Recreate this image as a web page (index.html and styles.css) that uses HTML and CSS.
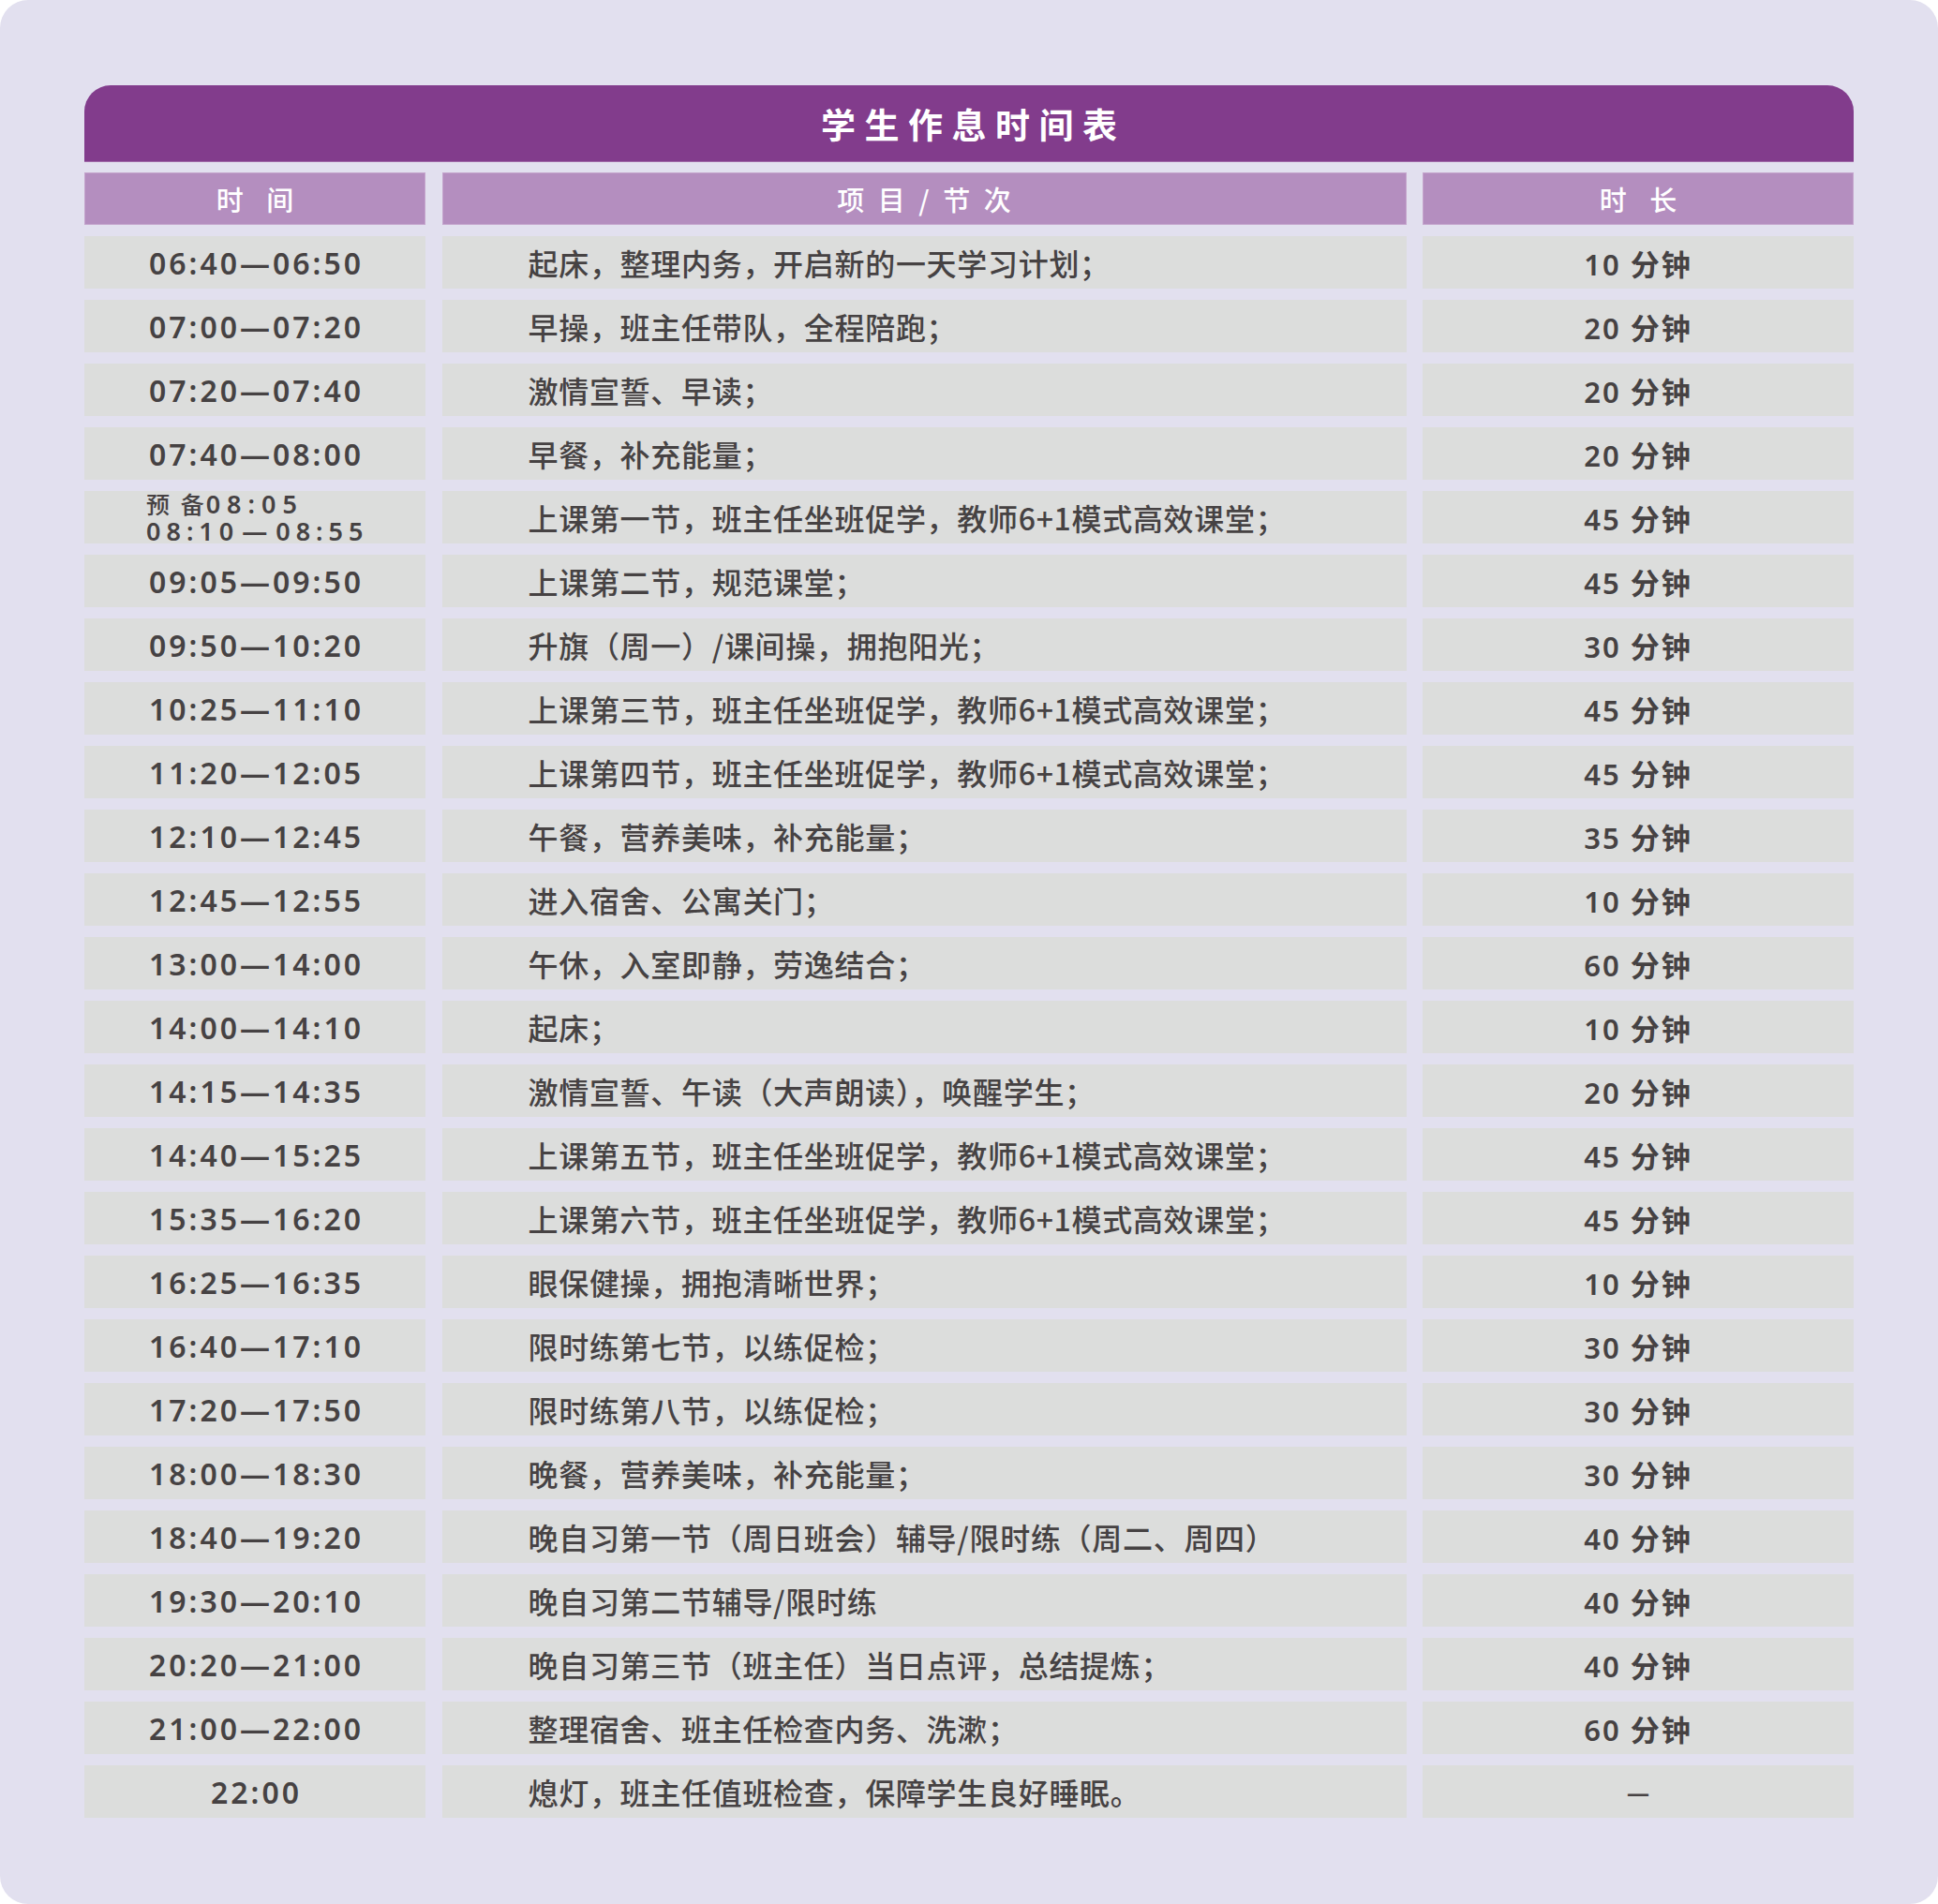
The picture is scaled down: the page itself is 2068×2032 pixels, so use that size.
FILE: index.html
```html
<!DOCTYPE html>
<html lang="zh-CN">
<head>
<meta charset="utf-8">
<title>学生作息时间表</title>
<link rel="stylesheet" href="styles.css">
</head>
<body>
<div class="panel">
  <div class="sheet">
    <div class="title">学生作息时间表</div>
    <div class="grid">
      <div class="hd">时 间</div>
      <div class="hd hd-mid">项 目 / 节 次</div>
      <div class="hd">时 长</div>

      <div class="c t">06:40—06:50</div><div class="c p">起床，整理内务，开启新的一天学习计划；</div><div class="c d">10 分钟</div>
      <div class="c t">07:00—07:20</div><div class="c p">早操，班主任带队，全程陪跑；</div><div class="c d">20 分钟</div>
      <div class="c t">07:20—07:40</div><div class="c p">激情宣誓、早读；</div><div class="c d">20 分钟</div>
      <div class="c t">07:40—08:00</div><div class="c p">早餐，补充能量；</div><div class="c d">20 分钟</div>
      <div class="c t t2"><span class="ln ln1"><span class="zh">预 备</span>08:05</span><span class="ln">08:10<span class="em">—</span>08:55</span></div><div class="c p">上课第一节，班主任坐班促学，教师6+1模式高效课堂；</div><div class="c d">45 分钟</div>
      <div class="c t">09:05—09:50</div><div class="c p">上课第二节，规范课堂；</div><div class="c d">45 分钟</div>
      <div class="c t">09:50—10:20</div><div class="c p">升旗（周一）/课间操，拥抱阳光；</div><div class="c d">30 分钟</div>
      <div class="c t">10:25—11:10</div><div class="c p">上课第三节，班主任坐班促学，教师6+1模式高效课堂；</div><div class="c d">45 分钟</div>
      <div class="c t">11:20—12:05</div><div class="c p">上课第四节，班主任坐班促学，教师6+1模式高效课堂；</div><div class="c d">45 分钟</div>
      <div class="c t">12:10—12:45</div><div class="c p">午餐，营养美味，补充能量；</div><div class="c d">35 分钟</div>
      <div class="c t">12:45—12:55</div><div class="c p">进入宿舍、公寓关门；</div><div class="c d">10 分钟</div>
      <div class="c t">13:00—14:00</div><div class="c p">午休，入室即静，劳逸结合；</div><div class="c d">60 分钟</div>
      <div class="c t">14:00—14:10</div><div class="c p">起床；</div><div class="c d">10 分钟</div>
      <div class="c t">14:15—14:35</div><div class="c p">激情宣誓、午读（大声朗读），唤醒学生；</div><div class="c d">20 分钟</div>
      <div class="c t">14:40—15:25</div><div class="c p">上课第五节，班主任坐班促学，教师6+1模式高效课堂；</div><div class="c d">45 分钟</div>
      <div class="c t">15:35—16:20</div><div class="c p">上课第六节，班主任坐班促学，教师6+1模式高效课堂；</div><div class="c d">45 分钟</div>
      <div class="c t">16:25—16:35</div><div class="c p">眼保健操，拥抱清晰世界；</div><div class="c d">10 分钟</div>
      <div class="c t">16:40—17:10</div><div class="c p">限时练第七节，以练促检；</div><div class="c d">30 分钟</div>
      <div class="c t">17:20—17:50</div><div class="c p">限时练第八节，以练促检；</div><div class="c d">30 分钟</div>
      <div class="c t">18:00—18:30</div><div class="c p">晚餐，营养美味，补充能量；</div><div class="c d">30 分钟</div>
      <div class="c t">18:40—19:20</div><div class="c p">晚自习第一节（周日班会）辅导/限时练（周二、周四）</div><div class="c d">40 分钟</div>
      <div class="c t">19:30—20:10</div><div class="c p">晚自习第二节辅导/限时练</div><div class="c d">40 分钟</div>
      <div class="c t">20:20—21:00</div><div class="c p">晚自习第三节（班主任）当日点评，总结提炼；</div><div class="c d">40 分钟</div>
      <div class="c t">21:00—22:00</div><div class="c p">整理宿舍、班主任检查内务、洗漱；</div><div class="c d">60 分钟</div>
      <div class="c t">22:00</div><div class="c p">熄灯，班主任值班检查，保障学生良好睡眠。</div><div class="c d"><span class="dash">—</span></div>
    </div>
  </div>
</div>
</body>
</html>
```

FILE: styles.css
```css
html, body {
  margin: 0;
  padding: 0;
  background: #ffffff;
}

.panel {
  width: 2068px;
  height: 2032px;
  box-sizing: border-box;
  background: #e2e0ef;
  border-radius: 30px;
  padding: 91px 90px 0 90px;
  font-family: "Noto Sans CJK SC", "Noto Sans", sans-serif;
  color: #464243;
}

.sheet {
  display: flex;
  flex-direction: column;
  gap: 11px;
}

.title {
  height: 82px;
  box-sizing: border-box;
  background: #823c8c;
  border-bottom: 1px solid #a06aa8;
  border-radius: 28px 28px 0 0;
  color: #ffffff;
  font-size: 37px;
  font-weight: 700;
  letter-spacing: 9.5px;
  text-indent: 9.5px;
  display: flex;
  align-items: center;
  justify-content: center;
}

.grid {
  display: grid;
  grid-template-columns: 364px 1029px 460px;
  grid-auto-rows: 56px;
  column-gap: 17.5px;
  row-gap: 12px;
}

.hd {
  background: #b48ebf;
  border: 1px solid #c5a6cd;
  color: #ffffff;
  font-size: 29px;
  font-weight: 500;
  letter-spacing: 9px;
  text-indent: 9px;
  display: flex;
  align-items: center;
  justify-content: center;
}

.hd-mid {
  letter-spacing: 3px;
  text-indent: 3px;
  word-spacing: 2px;
}

.c {
  background: #dcdddc;
  display: flex;
  align-items: center;
}

.t {
  justify-content: center;
  font-family: "Noto Sans", "Noto Sans CJK SC", sans-serif;
  font-weight: 600;
  font-size: 32px;
  letter-spacing: 3px;
  text-indent: 3px;
}

.t2 {
  flex-direction: column;
  align-items: flex-start;
  justify-content: center;
  padding-left: 66px;
  font-size: 27px;
  letter-spacing: 6px;
  text-indent: 0;
}

.ln {
  display: block;
  height: 29px;
  line-height: 29px;
  white-space: pre;
}

.ln1 {
  letter-spacing: 7px;
}

.zh {
  font-family: "Noto Sans CJK SC", sans-serif;
  font-weight: 500;
  font-size: 25px;
  letter-spacing: 2px;
  word-spacing: 2px;
}

.em {
  padding: 0 3px;
}

.p {
  padding-left: 92px;
  font-size: 32px;
  font-weight: 500;
  letter-spacing: 0.7px;
}

.d {
  justify-content: center;
  font-family: "Noto Sans", "Noto Sans CJK SC", sans-serif;
  font-weight: 600;
  font-size: 31px;
  letter-spacing: 2px;
}

.dash {
  font-family: "Noto Sans", sans-serif;
  font-size: 24px;
  font-weight: 700;
  letter-spacing: 0;
}
```
